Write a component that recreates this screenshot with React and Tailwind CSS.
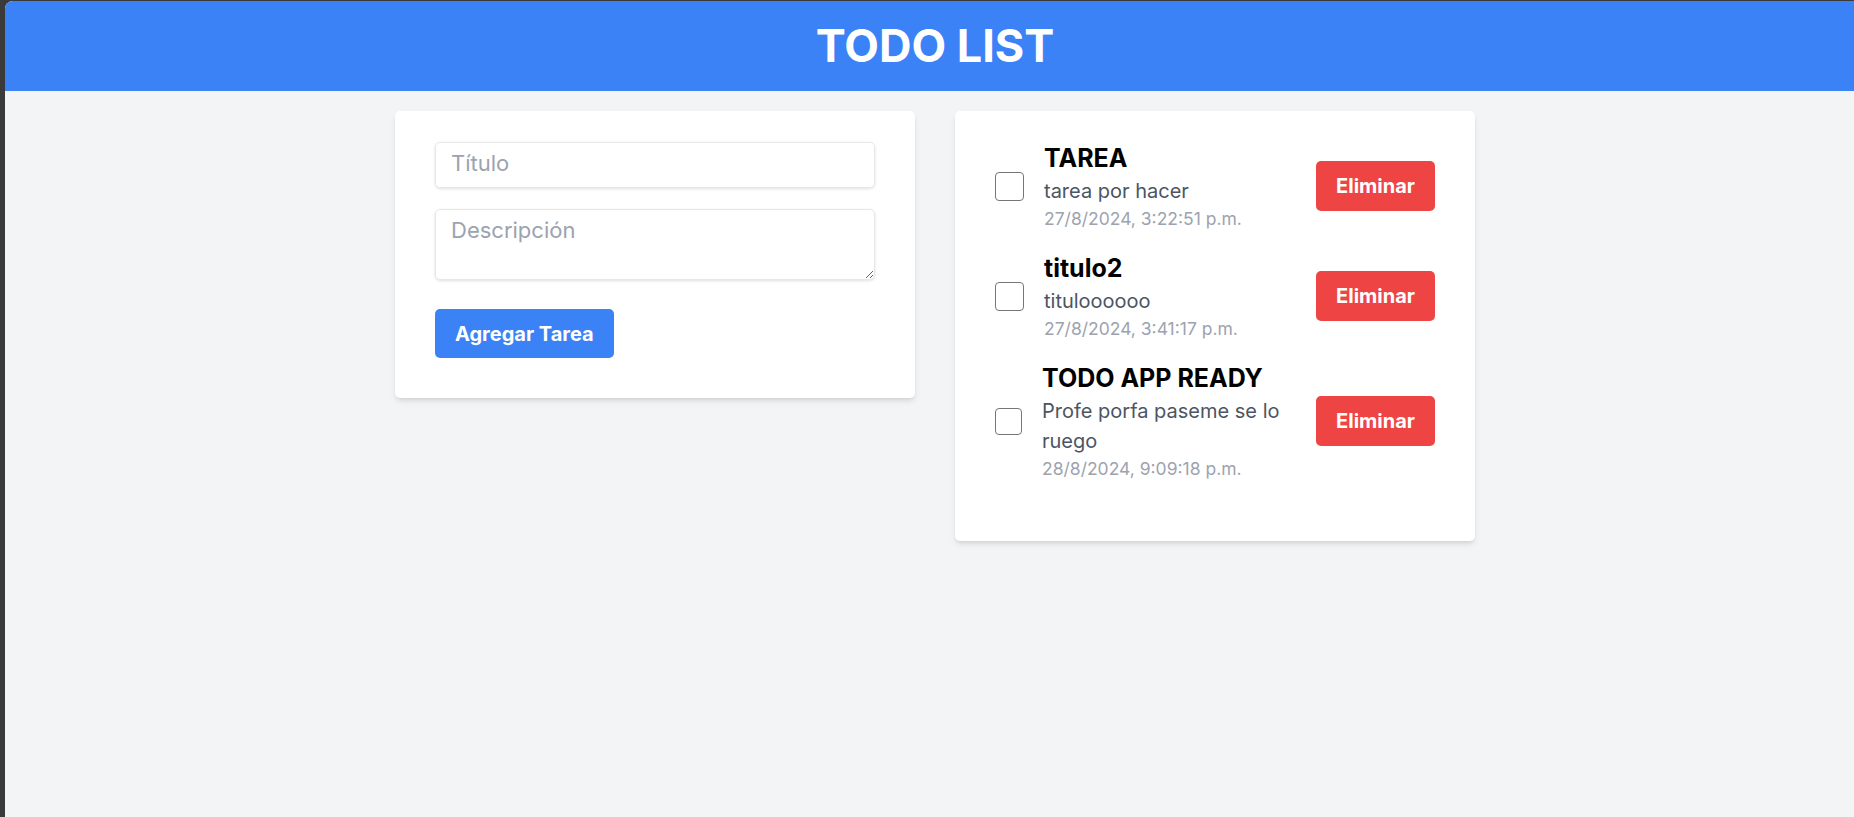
import React from "react";

const tasks = [
  { title: "TAREA", desc: "tarea por hacer", date: "27/8/2024, 3:22:51 p.m.", box: "w-[29px] h-[29px]" },
  { title: "titulo2", desc: "tituloooooo", date: "27/8/2024, 3:41:17 p.m.", box: "w-[29px] h-[29px]" },
  { title: "TODO APP READY", desc: "Profe porfa paseme se lo ruego", date: "28/8/2024, 9:09:18 p.m.", box: "w-[27px] h-[27px]" },
];

export default function App() {
  return (
    <div className="w-full h-[817px] overflow-hidden bg-[#3a3a3a] pt-[1px] pl-[5px]" style={{ fontFamily: "Inter, 'Noto Sans', sans-serif" }}>
      <div className="w-[1860px] h-[816px] bg-[#f3f4f6] rounded-tl-[8px] overflow-hidden">
        <header className="bg-[#3b82f6] h-[90px] flex items-center justify-center">
          <h1 className="text-white font-bold text-[45px] leading-[50px]">TODO LIST</h1>
        </header>
        <main className="flex justify-center items-start gap-[40px] pt-[20px]">
          <div className="w-[520px] bg-white rounded-[5px] shadow-[0_4px_6px_-1px_rgba(0,0,0,0.1),0_2px_4px_-2px_rgba(0,0,0,0.1)] px-[40px] pt-[31px] pb-[40px] flex flex-col">
            <input
              type="text"
              placeholder="Título"
              className="h-[46px] w-full border border-[#e5e7eb] rounded-[5px] shadow-[0_1px_3px_rgba(0,0,0,0.12)] px-[15px] pb-[4px] text-[22px] text-gray-700 placeholder:text-[#9ca3af] outline-none"
            />
            <textarea
              placeholder="Descripción"
              className="mt-[21px] h-[71px] w-full border border-[#e5e7eb] rounded-[5px] shadow-[0_1px_3px_rgba(0,0,0,0.12)] px-[15px] pt-[6px] pb-[8px] text-[22px] leading-[28px] text-gray-700 placeholder:text-[#9ca3af] outline-none"
            />
            <div className="mt-[29px]">
              <button className="h-[49px] px-[20px] bg-[#3b82f6] text-white font-bold text-[20px] rounded-[5px]">
                Agregar Tarea
              </button>
            </div>
          </div>
          <div className="w-[520px] bg-white rounded-[5px] shadow-[0_4px_6px_-1px_rgba(0,0,0,0.1),0_2px_4px_-2px_rgba(0,0,0,0.1)] pl-[40px] pr-[40px] pt-[30px] pb-[60px] flex flex-col gap-[20px]">
            {tasks.map((t, i) => (
              <div key={i} className="flex items-center justify-between">
                <div className="flex items-center">
                  <span className={`${t.box} shrink-0 border-[1.5px] border-[#767676] rounded-[4px] bg-white`} />
                  <div className="ml-[20px] max-w-[270px]">
                    <div className="text-[25px] leading-[35px] font-bold text-black">{t.title}</div>
                    <div className="text-[20px] leading-[30px] text-[#4b5563]">{t.desc}</div>
                    <div className="text-[17.5px] leading-[25px] text-[#9ca3af]">{t.date}</div>
                  </div>
                </div>
                <button className="h-[50px] w-[119px] bg-[#ef4444] text-white font-bold text-[20px] rounded-[5px] shrink-0">
                  Eliminar
                </button>
              </div>
            ))}
          </div>
        </main>
      </div>
    </div>
  );
}
